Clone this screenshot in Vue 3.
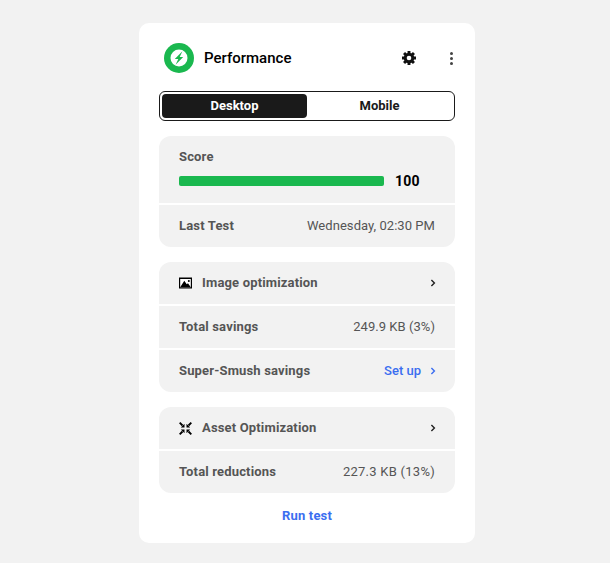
<script setup>
const savings = [
  { label: 'Total savings', value: '249.9 KB (3%)' },
]
</script>

<template>
  <main class="page">
    <section class="card">
      <header class="head">
        <span class="logo">
          <svg width="30" height="30" viewBox="0 0 30 30">
            <circle cx="15" cy="15" r="15" fill="#1ab84f" />
            <circle cx="15" cy="15" r="8.500" fill="#fff" />
            <path d="M18.400 8.200 10.800 15.900h3.500l-2.700 5.900 7.600-7.800h-3.500z" fill="#1ab84f" />
          </svg>
        </span>
        <h1 class="title">Performance</h1>
        <svg class="gear" width="14" height="14" viewBox="0 0 24 24">
          <path d="M12 0v24M0 12h24M3.500 3.500l17 17M20.500 3.500l-17 17" stroke="#111" stroke-width="5" fill="none" />
          <circle cx="12" cy="12" r="9" fill="#111" />
          <circle cx="12" cy="12" r="4" fill="#fff" />
        </svg>
        <span class="dots"><i></i><i></i><i></i></span>
      </header>

      <div class="tabs">
        <button class="tab active">Desktop</button>
        <button class="tab">Mobile</button>
      </div>

      <div class="panel">
        <div class="row score">
          <span class="label">Score</span>
          <div class="bar-line">
            <span class="bar"></span>
            <strong class="num">100</strong>
          </div>
        </div>
        <div class="row r-44">
          <span class="label">Last Test</span>
          <span class="value">Wednesday, 02:30 PM</span>
        </div>
      </div>

      <div class="panel">
        <div class="row r-42">
          <span class="label with-icon">
            <svg width="13" height="12" viewBox="0 0 13 12">
              <rect x="0" y="0.500" width="13" height="11" fill="#000" />
              <rect x="1.200" y="2" width="10.600" height="8.300" fill="#fff" />
              <path d="M1.200 10.300 5.300 3.800l2.400 3.500 1.300-1.100 2.800 4.100z" fill="#000" />
              <circle cx="9.800" cy="3.900" r="1" fill="#000" />
            </svg>
            Image optimization
          </span>
          <svg class="chev" width="6" height="8" viewBox="0 0 6 8"><path d="M1.400 1 4.400 4l-3 3" fill="none" stroke="#222" stroke-width="1.400" /></svg>
        </div>
        <div v-for="s in savings" :key="s.label" class="row r-42">
          <span class="label">{{ s.label }}</span>
          <span class="value">{{ s.value }}</span>
        </div>
        <div class="row r-42">
          <span class="label">Super-Smush savings</span>
          <span class="link-wrap">
            <a class="link">Set up</a>
            <svg class="chev" width="6" height="8" viewBox="0 0 6 8"><path d="M1.400 1 4.400 4l-3 3" fill="none" stroke="#3b6ef0" stroke-width="1.400" /></svg>
          </span>
        </div>
      </div>

      <div class="panel">
        <div class="row r-42">
          <span class="label with-icon">
            <svg width="13" height="13" viewBox="0 0 13 13">
              <path d="M.7.700 3.500 3.500M12.300.700 9.500 3.500M.7 12.300 3.500 9.500M12.300 12.300 9.500 9.500" stroke="#000" stroke-width="1.900" fill="none" />
              <path d="M5.500 1.800V5.500H1.800zM7.500 1.800V5.500H11.200zM5.500 11.200V7.500H1.800zM7.500 11.200V7.500H11.200z" fill="#000" />
            </svg>
            Asset Optimization
          </span>
          <svg class="chev" width="6" height="8" viewBox="0 0 6 8"><path d="M1.400 1 4.400 4l-3 3" fill="none" stroke="#222" stroke-width="1.400" /></svg>
        </div>
        <div class="row r-42">
          <span class="label">Total reductions</span>
          <span class="value wide">227.3 KB (13%)</span>
        </div>
      </div>

      <a class="run">Run test</a>
    </section>
  </main>
</template>

<style>
html, body { margin: 0; background: #f2f2f2; }
</style>

<style scoped>
.page {
  box-sizing: border-box;
  display: flex;
  justify-content: center;
  padding: 23px 0 0 4px;
  height: 563px;
  font-family: Roboto, "Liberation Sans", sans-serif;
  color: #555;
}
.card {
  box-sizing: border-box;
  width: 336px;
  height: 520px;
  padding: 20px;
  background: #fff;
  border-radius: 10px;
  display: flex;
  flex-direction: column;
}
.head {
  display: flex;
  align-items: center;
  flex: none;
  height: 30px;
  padding-left: 5px;
  padding-right: 2px;
}
.logo { width: 30px; height: 30px; display: block; margin-right: 10px; }
.logo svg { display: block; }
.title {
  margin: 0;
  flex: 1;
  font-size: 15px;
  font-weight: 500;
  color: #000;
}
.gear { margin-right: 34px; margin-top: -1px; }
.dots { display: flex; flex-direction: column; gap: 2px; }
.dots i { width: 3px; height: 3px; border-radius: 50%; background: #444; display: block; }
.tabs {
  box-sizing: border-box;
  flex: none;
  margin-top: 18px;
  height: 30px;
  border: 1px solid #1a1a1a;
  border-radius: 6px;
  padding: 2px;
  display: flex;
}
.tab {
  flex: 1;
  border: 0;
  padding: 0 0 2px;
  background: transparent;
  font: 700 13px Roboto, sans-serif;
  color: #1a1a1a;
  border-radius: 4px;
}
.tab.active { background: #1a1a1a; color: #fff; flex: 0 0 145px; }
.panel {
  flex: none;
  margin-top: 15px;
  background: #f2f2f2;
  border-radius: 12px;
  display: flex;
  flex-direction: column;
  overflow: hidden;
}
.row {
  box-sizing: border-box;
  display: flex;
  align-items: center;
  justify-content: space-between;
  padding: 0 20px;
  font-size: 13px;
  line-height: 16px;
}
.row + .row { border-top: 2px solid #fff; }
.r-42 { height: 44px; }
.row.r-42:first-child { height: 42px; }
.r-44 { height: 44px; }
.score {
  height: 67px;
  flex-direction: column;
  align-items: stretch;
  justify-content: flex-start;
  padding-top: 13px;
}
.label { font-weight: 700; color: #555; letter-spacing: 0.16px; }
.value { color: #555; letter-spacing: 0.05px; }
.value.wide { letter-spacing: 0.26px; }
.with-icon { display: flex; align-items: center; gap: 10px; }
.bar-line { display: flex; align-items: center; margin-top: 8px; }
.bar { width: 205px; height: 10px; border-radius: 2px; background: #1ab84f; }
.num { margin-left: 11px; font-size: 14px; font-weight: 700; color: #000; line-height: 16px; letter-spacing: 0.2px; }
.chev { display: block; margin-right: -1px; }
.link-wrap { display: flex; align-items: center; gap: 9px; }
.link { color: #3b6ef0; font-weight: 500; }
.run {
  flex: none;
  margin-top: 15px;
  text-align: center;
  font-size: 13px;
  line-height: 16px;
  font-weight: 700;
  letter-spacing: 0.2px;
  color: #3b6ef0;
}
</style>
